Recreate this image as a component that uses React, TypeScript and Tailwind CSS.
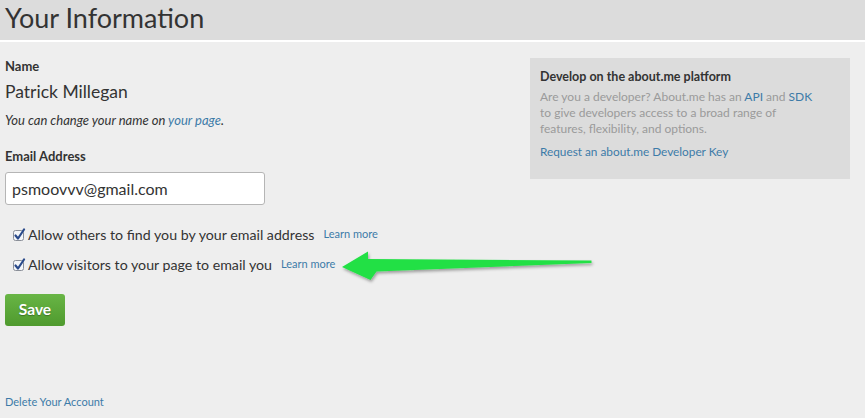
import React from 'react'

function Check() {
  return (
    <svg width="14" height="14" viewBox="0 0 14 14" className="shrink-0">
      <rect x="1.5" y="2.5" width="10" height="10" rx="2" fill="#f4f6f9" stroke="#8a8f98" />
      <path d="M3.5 7.5l2.5 3 6-9" fill="none" stroke="#2a4a8a" strokeWidth="2.2" strokeLinecap="round" strokeLinejoin="round" />
    </svg>
  )
}

function CheckRow({ label }: { label: string }) {
  return (
    <div className="flex h-[17px] items-center gap-[2px] pl-[7px]">
      <Check />
      <span className="text-[14.2px] text-[#333]">{label}</span>
      <a className="ml-[7px] text-[11px] text-[#3d7ba8]">Learn more</a>
    </div>
  )
}

export default function App() {
  return (
    <div className="relative h-[418px] w-[865px] overflow-hidden bg-[#eeeeee] font-['Lato',sans-serif] text-[#333]">
      {/* Header */}
      <div className="h-[42px] border-b-2 border-white bg-[#dcdcdc] px-[5px]">
        <h1 className="text-[27px] leading-[36px] text-[#333]">Your Information</h1>
      </div>

      <div className="flex justify-between pr-[15px]">
        <div className="flex flex-col pl-[5px] pt-[16px]">
          <div className="text-[13px] font-bold leading-[16px]">Name</div>
          <div className="mt-[7px] text-[17.5px] leading-[22px]">Patrick Millegan</div>
          <div className="mt-[10px] text-[13px] italic leading-[15px]">
            You can change your name on <a className="text-[#3d7ba8]">your page</a>.
          </div>

          <div className="mt-[20px] text-[13px] font-bold leading-[16px]">Email Address</div>
          <div className="mt-[8px] flex h-[33px] w-[260px] items-center rounded-[3px] border border-[#b5b5b5] bg-white px-[6px] text-[16px]">
            psmoovvv@gmail.com
          </div>

          <div className="mt-[21px] flex flex-col gap-[13px]">
            <CheckRow label="Allow others to find you by your email address" />
            <CheckRow label="Allow visitors to your page to email you" />
          </div>

          <button className="mt-[21px] h-[32px] w-[60px] rounded-[3px] bg-gradient-to-b from-[#68b545] to-[#4f9a2e] text-[15.5px] font-bold text-white [text-shadow:0_1px_1px_rgba(0,0,0,0.3)]">
            Save
          </button>

          <a className="mt-[69px] text-[11px] leading-[14px] text-[#3d7ba8]">Delete Your Account</a>
        </div>

        <div className="mt-[16px] h-[121px] w-[320px] bg-[#dcdcdc] px-[10px] pt-[11px]">
          <div className="text-[12.5px] font-bold leading-[16px] text-[#333]">Develop on the about.me platform</div>
          <p className="mt-[4px] w-[278px] text-[12px] leading-[16px] text-[#9a9a9a]">
            Are you a developer? About.me has an <a className="text-[#3d7ba8]">API</a> and{' '}
            <a className="text-[#3d7ba8]">SDK</a> to give developers access to a broad range of features, flexibility,
            and options.
          </p>
          <a className="mt-[8px] block text-[11.8px] leading-[14px] text-[#3d7ba8]">Request an about.me Developer Key</a>
        </div>
      </div>

      {/* annotation arrow */}
      <svg className="pointer-events-none absolute left-[330px] top-[240px]" width="280" height="55" viewBox="330 240 280 55">
        <defs>
          <filter id="sh" x="-10%" y="-30%" width="120%" height="160%">
            <feDropShadow dx="1" dy="2" stdDeviation="1.5" floodColor="#000" floodOpacity="0.35" />
          </filter>
        </defs>
        <path
          d="M342 267 L368 251.5 L368 259 L591.5 260.5 L591.5 263 L376.5 271.5 L370.5 280 Z"
          fill="#21e045"
          filter="url(#sh)"
        />
      </svg>
    </div>
  )
}
